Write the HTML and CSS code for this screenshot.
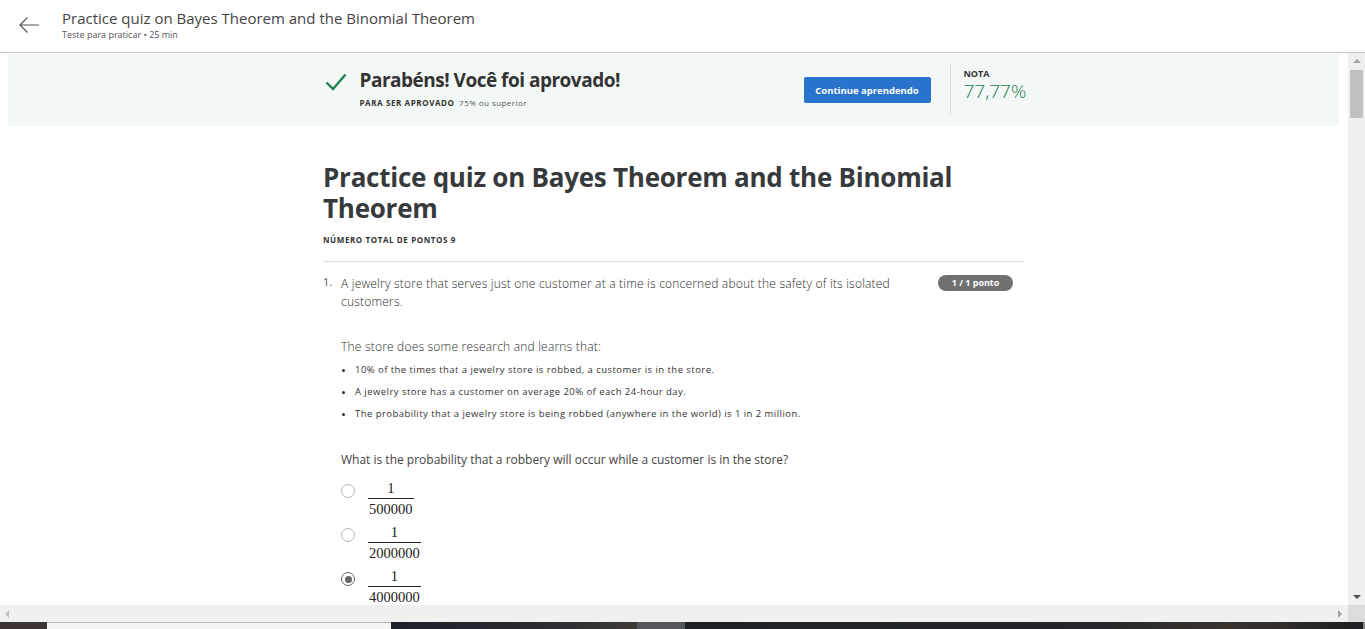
FILE: index.html
```html
<!DOCTYPE html>
<html lang="pt">
<head>
<meta charset="utf-8">
<title>Practice quiz</title>
<link rel="stylesheet" href="styles.css">
</head>
<body>
<header class="topbar">
  <svg class="back" width="22" height="18" viewBox="0 0 22 18"><path d="M21 9H2M9.5 1.5L2 9l7.5 7.5" fill="none" stroke="#555" stroke-width="1.2"/></svg>
  <div class="top-titles">
    <div class="top-title">Practice quiz on Bayes Theorem and the Binomial Theorem</div>
    <div class="top-sub">Teste para praticar • 25 min</div>
  </div>
</header>
<div class="window">
  <div class="viewport">
    <section class="banner">
      <div class="banner-inner">
        <svg class="check" width="22" height="18" viewBox="0 0 22 18"><path d="M1.5 9.5L8 16 20.5 1.5" fill="none" stroke="#1f8354" stroke-width="2.4"/></svg>
        <div class="pass-text">
          <div class="pass-title">Parabéns! Você foi aprovado!</div>
          <div class="pass-req"><b>PARA SER APROVADO</b> 75% ou superior</div>
        </div>
        <button class="continue">Continue aprendendo</button>
        <div class="divider"></div>
        <div class="grade">
          <div class="grade-label">NOTA</div>
          <div class="grade-value">77,77%</div>
        </div>
      </div>
    </section>
    <main class="content">
      <h1 class="quiz-title">Practice quiz on Bayes Theorem and the Binomial Theorem</h1>
      <div class="points-total">NÚMERO TOTAL DE PONTOS 9</div>
      <hr class="sep">
      <div class="question">
        <div class="qnum">1.</div>
        <div class="qbody">
          <div class="qhead">
            <p class="qtext">A jewelry store that serves just one customer at a time is concerned about the safety of its isolated customers.</p>
            <span class="badge">1 / 1 ponto</span>
          </div>
          <p class="qpara">The store does some research and learns that:</p>
          <ul class="facts">
            <li>10% of the times that a jewelry store is robbed, a customer is in the store.</li>
            <li>A jewelry store has a customer on average 20% of each 24-hour day.</li>
            <li>The probability that a jewelry store is being robbed (anywhere in the world) is 1 in 2 million.</li>
          </ul>
          <p class="qask">What is the probability that a robbery will occur while a customer is in the store?</p>
          <div class="options">
            <label class="option"><span class="radio"></span><span class="frac"><span class="num">1</span><span class="den">500000</span></span></label>
            <label class="option"><span class="radio"></span><span class="frac"><span class="num">1</span><span class="den">2000000</span></span></label>
            <label class="option"><span class="radio checked"></span><span class="frac"><span class="num">1</span><span class="den">4000000</span></span></label>
          </div>
        </div>
      </div>
    </main>
  </div>
  <div class="vscroll">
    <span class="arr-up"></span>
    <span class="thumb"></span>
    <span class="vspace"></span>
    <span class="arr-down"></span>
  </div>
</div>
<div class="hscroll">
  <div class="htrack"><span class="arr-left"></span><span class="arr-right"></span></div>
  <div class="corner"></div>
</div>
<div class="taskbar">
  <span class="tb a"></span><span class="tb b"></span><span class="tb c"></span><span class="tb d"></span><span class="tb e"></span>
</div>
</body>
</html>
```
FILE: styles.css
```css
* { box-sizing: border-box; }
html, body { margin: 0; padding: 0; }
body {
  width: 1365px;
  height: 629px;
  overflow: hidden;
  display: flex;
  flex-direction: column;
  font-family: "Open Sans", "Noto Sans", sans-serif;
  color: #333;
  background: #fff;
}
.topbar {
  height: 53px;
  flex: none;
  border-bottom: 1px solid #c4c4c4;
  display: flex;
  align-items: flex-start;
  padding-left: 18px;
}
.back { margin-top: 16px; }
.top-titles { margin-left: 22px; padding-top: 8px; }
.top-title { font-size: 15px; line-height: 20px; color: #444; }
.top-sub { font-size: 9px; line-height: 10px; color: #555; margin-top: 2px; }

.window { flex: none; height: 552px; display: flex; }
.viewport { flex: 1; overflow: hidden; background: #fff; }
.vscroll {
  width: 17px;
  background: #f0f0f0;
  display: flex;
  flex-direction: column;
  align-items: center;
}
.arr-up {
  margin-top: 6px;
  width: 0; height: 0;
  border-left: 4px solid transparent;
  border-right: 4px solid transparent;
  border-bottom: 4px solid #a3a3a3;
}
.thumb { width: 13px; height: 48px; background: #c1c1c1; margin-top: 7px; }
.vspace { flex: 1; }
.arr-down {
  margin-bottom: 6px;
  width: 0; height: 0;
  border-left: 4px solid transparent;
  border-right: 4px solid transparent;
  border-top: 4px solid #505050;
}
.hscroll { flex: none; height: 17px; display: flex; }
.htrack {
  flex: 1;
  background: #f0f0f0;
  display: flex;
  align-items: center;
  justify-content: space-between;
  padding: 0 6px 0 5px;
}
.arr-left {
  width: 0; height: 0;
  border-top: 4px solid transparent;
  border-bottom: 4px solid transparent;
  border-right: 4px solid #c0c0c0;
}
.arr-right {
  width: 0; height: 0;
  border-top: 4px solid transparent;
  border-bottom: 4px solid transparent;
  border-left: 4px solid #a0a0a0;
}
.corner { width: 17px; background: #dcdcdc; }
.taskbar { flex: none; height: 7px; display: flex; }
.tb { display: block; height: 7px; }
.tb.a { width: 47px; background: #3b3431; }
.tb.b { width: 344px; background: #f4f4f4; border-top: 1px solid #b8b8b8; }
.tb.c { width: 246px; background: linear-gradient(90deg, #1d2129, #2a2a30 60%, #3e3a38); }
.tb.d { width: 48px; background: #55575c; }
.tb.e { flex: 1; background: linear-gradient(90deg, #1e2227, #24252a 60%, #3a332e 80%, #1e2023); border-right: 2px solid #888; }

.banner {
  margin: 1px 9px 0 8px;
  height: 72px;
  background: #f3f8f6;
  display: flex;
  justify-content: center;
}
.banner-inner {
  width: 702px;
  display: flex;
  align-items: flex-start;
}
.check { margin: 19px 0 0 2px; flex: none; }
.pass-text { margin-left: 13px; padding-top: 13px; flex: 1; }
.pass-title { font-size: 19px; line-height: 27px; font-weight: 700; color: #333; letter-spacing: -0.5px; }
.pass-req { font-size: 8px; line-height: 12px; color: #555; margin-top: 3px; letter-spacing: 0.45px; }
.pass-req b { color: #333; margin-right: 2px; letter-spacing: 0.6px; }
.continue {
  margin-top: 23px;
  width: 127px;
  height: 26px;
  border: 0;
  border-radius: 2px;
  background: #2a73cc;
  color: #fff;
  font-family: inherit;
  font-size: 9.5px;
  font-weight: 700;
  padding: 0;
}
.divider { width: 1px; height: 50px; margin: 10px 13px 0 19px; background: #dcdcdc; }
.grade { padding-top: 14px; width: 61px; }
.grade-label { font-size: 9px; line-height: 12px; font-weight: 700; color: #333; }
.grade-value { font-size: 19px; line-height: 22px; color: #1a7c4d; font-weight: 300; }

.content { width: 702px; margin: 0 auto; padding-top: 36px; }
.quiz-title {
  margin: 0;
  font-size: 26px;
  line-height: 31px;
  font-weight: 700;
  color: #373a3c;
  letter-spacing: -0.25px;
}
.points-total { margin-top: 10px; font-size: 8px; line-height: 12px; font-weight: 700; color: #333; letter-spacing: 0.6px; }
.sep { margin: 15px 0 0; border: 0; border-top: 1px solid #dedede; }
.question { display: flex; margin-top: 13px; }
.qnum { width: 18px; font-size: 11px; line-height: 18px; color: #555; margin-top: -2px; }
.qbody { flex: 1; }
.qhead { display: flex; align-items: flex-start; justify-content: space-between; }
.qtext { margin: 0; width: 560px; font-size: 12px; line-height: 18px; color: #2a2a2a; font-weight: 300; letter-spacing: 0.2px; }
.badge {
  margin: 0 12px 0 0;
  width: 75px;
  height: 16px;
  border-radius: 8px;
  background: #707070;
  color: #fff;
  font-size: 9px;
  line-height: 16px;
  font-weight: 700;
  text-align: center;
}
.qpara { margin: 27px 0 0; font-size: 12px; line-height: 18px; color: #2a2a2a; font-weight: 300; letter-spacing: 0.2px; }
.facts { margin: 3px 0 0; padding-left: 14px; font-size: 9.5px; line-height: 22px; color: #333; font-weight: 400; letter-spacing: 0.45px; }
.qask { margin: 26px 0 0; font-size: 12px; line-height: 18px; color: #444; }
.options { margin-top: 11px; display: flex; flex-direction: column; gap: 7px; }
.option { display: flex; align-items: flex-start; }
.radio {
  margin-top: 4px;
  width: 14px; height: 14px;
  border-radius: 50%;
  border: 1px solid #b5b5b5;
  background: #fff;
  flex: none;
  position: relative;
}
.radio.checked { border-color: #666; }
.radio.checked::after {
  content: "";
  position: absolute;
  left: 2.5px; top: 2.5px;
  width: 7px; height: 7px;
  border-radius: 50%;
  background: #666;
}
.frac {
  margin-left: 13px;
  display: inline-flex;
  flex-direction: column;
  align-items: center;
  font-family: "Liberation Serif", "DejaVu Serif", serif;
  font-size: 14.5px;
  line-height: 16px;
  color: #222;
}
.num { padding: 0 1px 2px; }
.den { border-top: 1px solid #222; padding: 2px 1px 0; }
```
